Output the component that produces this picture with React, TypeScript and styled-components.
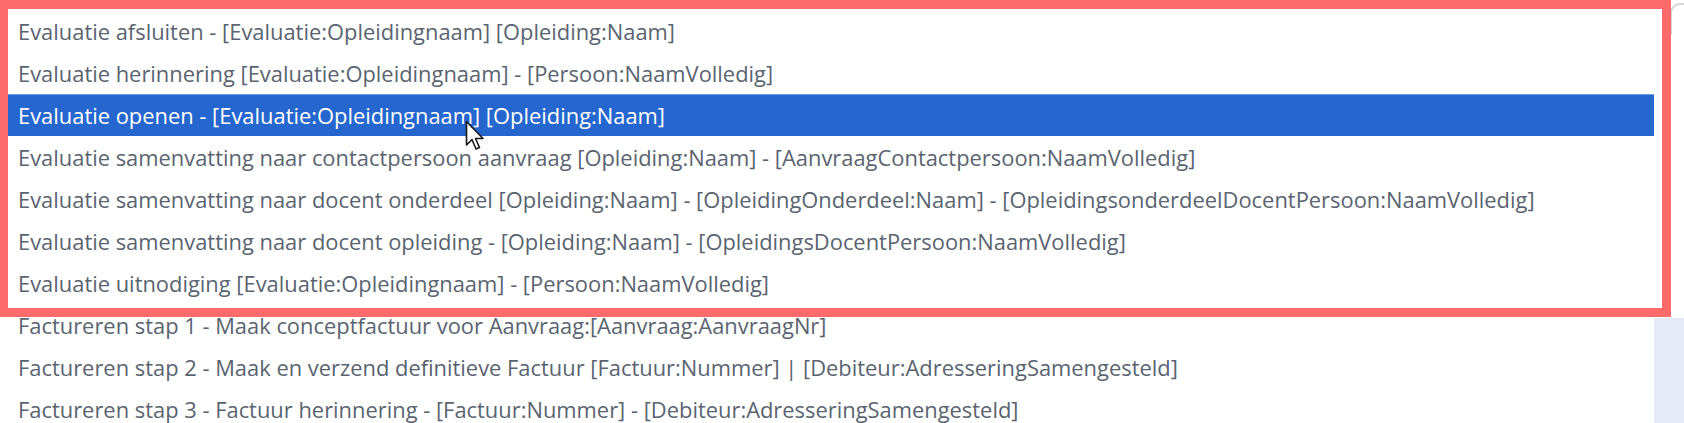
import React from "react";
import styled, { createGlobalStyle } from "styled-components";

const Global = createGlobalStyle`
  html, body { margin: 0; padding: 0; background: #ffffff; }
  body { font-family: "Open Sans", "Noto Sans", sans-serif; }
`;

const Page = styled.div`
  position: relative;
  width: 1684px;
  height: 423px;
  overflow: hidden;
  display: flex;
  background: #ffffff;
`;

const List = styled.ul`
  list-style: none;
  margin: 0;
  padding: 10px 0 0 0;
  width: 1654px;
  flex: none;
  background: #ffffff;
`;

const Row = styled.li<{ $active?: boolean }>`
  height: 42px;
  box-sizing: border-box;
  display: flex;
  align-items: center;
  padding-left: 18px;
  font-size: 21.9px;
  white-space: nowrap;
  color: ${(p) => (p.$active ? "#ffffff" : "#5a6470")};
  background: ${(p) => (p.$active ? "#2566cf" : "transparent")};
  border-top: 1px solid ${(p) => (p.$active ? "#6d9be3" : "transparent")};
`;

const Aside = styled.div`
  flex: 1;
  display: flex;
  flex-direction: column;
  justify-content: space-between;
  padding-top: 3px;
`;

const CornerFrame = styled.div`
  height: 30px;
  margin-left: 16px;
  border-top: 2px solid #d3d6da;
  border-left: 2px solid #d3d6da;
  border-top-left-radius: 10px;
`;

const SidePanel = styled.div`
  height: 105px;
  background: #e4ebf7;
`;

const Annotation = styled.div`
  position: absolute;
  left: 0;
  top: 0;
  width: 1671px;
  height: 317px;
  box-sizing: border-box;
  border: 9px solid #ff6b6b;
  border-left-width: 8px;
  pointer-events: none;
`;

const Cursor = styled.svg`
  position: absolute;
  left: 465px;
  top: 120px;
`;

const items = [
  "Evaluatie afsluiten - [Evaluatie:Opleidingnaam] [Opleiding:Naam]",
  "Evaluatie herinnering [Evaluatie:Opleidingnaam] - [Persoon:NaamVolledig]",
  "Evaluatie openen - [Evaluatie:Opleidingnaam] [Opleiding:Naam]",
  "Evaluatie samenvatting naar contactpersoon aanvraag [Opleiding:Naam] - [AanvraagContactpersoon:NaamVolledig]",
  "Evaluatie samenvatting naar docent onderdeel [Opleiding:Naam] - [OpleidingOnderdeel:Naam] - [OpleidingsonderdeelDocentPersoon:NaamVolledig]",
  "Evaluatie samenvatting naar docent opleiding - [Opleiding:Naam] - [OpleidingsDocentPersoon:NaamVolledig]",
  "Evaluatie uitnodiging [Evaluatie:Opleidingnaam] - [Persoon:NaamVolledig]",
  "Factureren stap 1 - Maak conceptfactuur voor Aanvraag:[Aanvraag:AanvraagNr]",
  "Factureren stap 2 - Maak en verzend definitieve Factuur [Factuur:Nummer] | [Debiteur:AdresseringSamengesteld]",
  "Factureren stap 3 - Factuur herinnering - [Factuur:Nummer] - [Debiteur:AdresseringSamengesteld]",
];

export default function App() {
  return (
    <>
      <Global />
      <Page>
        <List>
          {items.map((t, i) => (
            <Row key={i} $active={i === 2}>
              {t}
            </Row>
          ))}
        </List>
        <Aside>
          <CornerFrame />
          <SidePanel />
        </Aside>
        <Annotation />
        <Cursor width="20" height="32" viewBox="0 0 20 32">
          <path
            d="M1.5 1.5 L1.5 25 L7 19.5 L11 29 L14.5 27.5 L10.5 18.5 L18 18.5 Z"
            fill="#ffffff"
            stroke="#1a1a1a"
            strokeWidth="1.6"
            strokeLinejoin="round"
          />
        </Cursor>
      </Page>
    </>
  );
}
